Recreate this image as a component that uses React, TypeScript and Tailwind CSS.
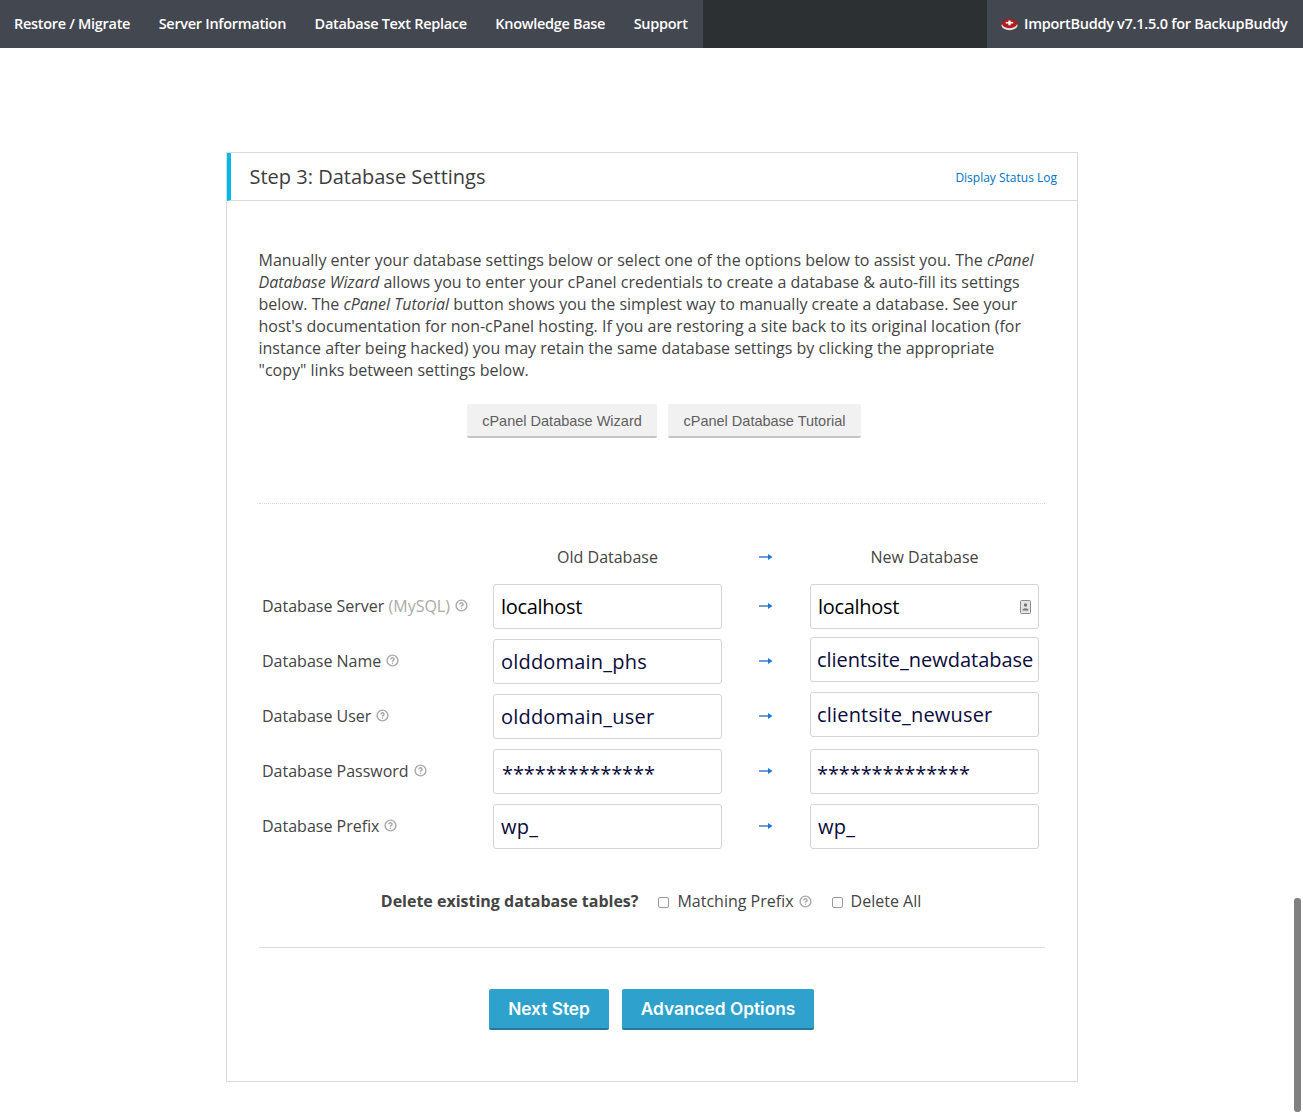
import { CircleHelp } from 'lucide-react';

const navLinks = ['Restore / Migrate', 'Server Information', 'Database Text Replace', 'Knowledge Base', 'Support'];

const rows = [
    { label: 'Database Server', extra: '(MySQL)', old: 'localhost', next: 'localhost', top: 0, plain: true, contact: true },
    { label: 'Database Name', old: 'olddomain_phs', next: 'clientsite_newdatabase', top: -2 },
    { label: 'Database User', old: 'olddomain_user', next: 'clientsite_newuser', top: -2 },
    { label: 'Database Password', old: '**************', next: '**************', top: 0, secret: true },
    { label: 'Database Prefix', old: 'wp_', next: 'wp_', top: 0 },
];

const Arrow = () => (
    <svg width="14" height="8" viewBox="0 0 14 8">
        <path d="M0 4h10" stroke="#5b93d6" strokeWidth="1.8" />
        <path d="M9 1 13.5 4 9 7z" fill="#1c78d8" />
    </svg>
);

const Help = () => <CircleHelp size={13} strokeWidth={2.6} className="shrink-0 text-[#a8a8a8]" />;

const Field = ({ value, secret, plain, wide, isNew, contact }: { value: string; secret?: boolean; plain?: boolean; wide?: boolean; isNew?: boolean; contact?: boolean }) => {
    let cls = 'pl-[7px] tracking-[0.2px]';
    if (plain) cls = 'pl-[7px] tracking-[-0.3px]';
    if (wide) cls = value.length > 20 ? 'pl-[6px] tracking-[-0.02px]' : 'pl-[6px] tracking-[0.18px]';
    if (secret) cls = `pt-[3px] tracking-[-0.1px] ${isNew ? 'pl-[6px]' : 'pl-[8px]'}`;
    return (
        <div className="relative">
            <input
                readOnly
                defaultValue={value}
                className={`h-[45px] w-[229px] rounded-[3px] border border-[#d4d4d4] bg-white pr-0 text-[20px] outline-none ${plain ? 'text-black' : 'text-[#0b0b3c]'} ${cls}`}
            />
            {contact && (
                <svg width="11" height="14" viewBox="0 0 11 14" className="absolute right-[8px] top-[16px]">
                    <rect x="0.5" y="0.5" width="10" height="13" rx="1" fill="#e4e4e4" stroke="#8d8d8d" />
                    <circle cx="5.5" cy="5" r="1.7" fill="#777" />
                    <path d="M2.5 10.5c0-3 6-3 6 0z" fill="#777" />
                </svg>
            )}
        </div>
    );
};

export default function App() {
    return (
        <div className="relative h-[1114px] overflow-hidden bg-white font-['Open_Sans',sans-serif] text-[#444]">
            <div className="flex h-12 bg-[#2c3033] text-[#fff]">
                <div className="flex w-[703px] items-center gap-[28.5px] bg-[#43474f] pl-[14px] text-[14.5px] font-semibold tracking-[-0.3px]">
                    {navLinks.map((link) => (
                        <a key={link} href="#">{link}</a>
                    ))}
                </div>
                <div className="ml-auto flex w-[316px] items-center bg-[#43474f] pl-[14px] text-[14.5px] font-semibold tracking-[-0.28px]">
                    <svg width="17" height="14" viewBox="0 0 17 14" className="mr-[6px]">
                        <ellipse cx="8.5" cy="8.6" rx="8" ry="4.6" fill="#e8dcdc" />
                        <ellipse cx="8.5" cy="6.6" rx="7.6" ry="4.6" fill="#b01c20" />
                        <path d="M7.4 3.4h2.2v1.7h2.6v1.5H9.6v1.7H7.4V6.6H4.8V5.1h2.6z" fill="#fff" />
                    </svg>
                    ImportBuddy v7.1.5.0 for BackupBuddy
                </div>
            </div>

            <div className="ml-[226px] mt-[104px] h-[930px] w-[852px] border border-[#d9d9d9]">
                <div className="flex h-[48px] items-center justify-between border-b border-l-[4px] border-b-[#d9d9d9] border-l-[#00b9eb] pl-[18.5px] pr-5">
                    <h2 className="text-[20px] text-[#3c3c3c]">Step 3: Database Settings</h2>
                    <a href="#" className="mt-[2px] text-[12px] text-[#0073c4]">Display Status Log</a>
                </div>

                <div className="px-[32px] pt-[48px]">
                    <p className="pr-[4px] text-[16px] leading-[22px] -ml-[0.5px]">
                        Manually enter your database settings below or select one of the options below to assist you. The <em>cPanel Database Wizard</em> allows you to enter your cPanel credentials to create a database &amp; auto-fill its settings below. The <em>cPanel Tutorial</em> button shows you the simplest way to manually create a database. See your host's documentation for non-cPanel hosting. If you are restoring a site back to its original location (for instance after being hacked) you may retain the same database settings by clicking the appropriate "copy" links between settings below.
                    </p>

                    <div className="mt-[23px] flex justify-center gap-[11px] pl-[24px] font-['Liberation_Sans',sans-serif] text-[14.5px] text-[#5f5f5f]">
                        <button className="h-[34px] w-[190px] rounded-[2px] border-b-2 border-b-[#c4c4c4] bg-[#f1f1f1] pt-[3px]">cPanel Database Wizard</button>
                        <button className="h-[34px] w-[193px] rounded-[2px] border-b-2 border-b-[#c4c4c4] bg-[#f1f1f1] pt-[3px]">cPanel Database Tutorial</button>
                    </div>

                    <div className="mt-[65px] border-t border-dotted border-[#d8d8d8]" />

                    <div className="mt-[43px] grid grid-cols-[234px_229px_88px_229px] items-center">
                        <div />
                        <div className="h-[20px] text-center leading-[20px]">Old Database</div>
                        <div className="flex justify-center"><Arrow /></div>
                        <div className="text-center leading-[20px]">New Database</div>
                    </div>

                    <div className="mt-[17px] grid grid-cols-[234px_229px_88px_229px] items-center gap-y-[10px]">
                        {rows.map((row) => (
                            <div key={row.label} className="contents">
                                <div className="flex items-center gap-[5px] pb-[2px] pl-[3px]">
                                    <span>{row.label}{row.extra && <span className="text-[#aaa]"> {row.extra}</span>}</span>
                                    <Help />
                                </div>
                                <Field value={row.old} secret={row.secret} plain={row.plain} />
                                <div className="flex justify-center pb-[2px]"><Arrow /></div>
                                <div className={`self-start ${row.top ? '-mt-[2px]' : ''}`}>
                                    <Field value={row.next} secret={row.secret} plain={row.plain} wide={row.top !== 0} isNew contact={row.contact} />
                                </div>
                            </div>
                        ))}
                    </div>

                    <div className="mt-[41px] flex items-center justify-center pr-[2px] leading-[22px]">
                        <b className="mr-[20px]">Delete existing database tables?</b>
                        <input type="checkbox" className="mr-[8px] mt-[2px] h-[11px] w-[11px] appearance-none rounded-[2px] border border-[#9a9a9a] bg-white" />
                        <span className="mr-[5px]">Matching Prefix</span>
                        <Help />
                        <input type="checkbox" className="ml-[20px] mr-[8px] mt-[2px] h-[11px] w-[11px] appearance-none rounded-[2px] border border-[#9a9a9a] bg-white" />
                        <span>Delete All</span>
                    </div>

                    <div className="mt-[35px] border-t border-[#dcdcdc]" />

                    <div className="mt-[41px] flex justify-center gap-[13px] pr-[1px] font-['Inter',sans-serif] text-[17.3px] font-semibold text-white">
                        <button className="h-[41px] w-[120px] rounded-[2px] border-b-2 border-b-[#22799e] bg-[#2ea2cc]">Next Step</button>
                        <button className="h-[41px] w-[192px] rounded-[2px] border-b-2 border-b-[#22799e] bg-[#2ea2cc]">Advanced Options</button>
                    </div>
                </div>
            </div>

            <div className="absolute bottom-[2px] right-[2px] h-[214px] w-[7px] rounded-[3px] bg-[#808080]" />
        </div>
    );
}
